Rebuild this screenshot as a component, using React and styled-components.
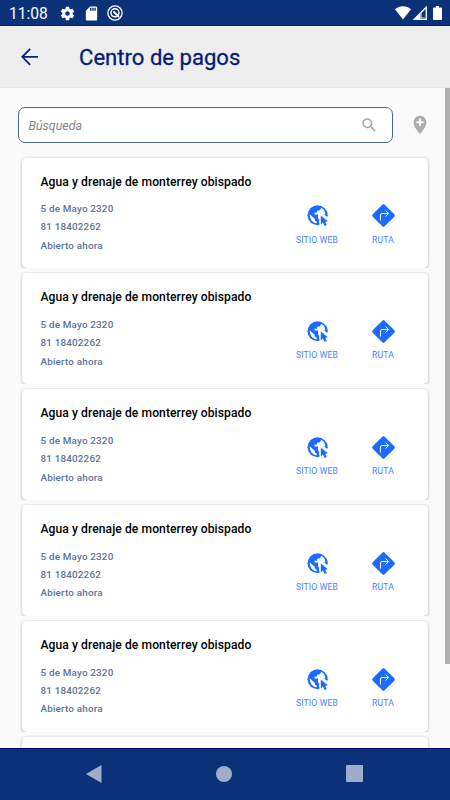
import React from "react";
import styled, { createGlobalStyle } from "styled-components";

const GlobalStyle = createGlobalStyle`
  * {
    box-sizing: border-box;
  }
  body {
    margin: 0;
    background: #fafafa;
    font-family: Roboto, "Liberation Sans", sans-serif;
  }
`;

const Screen = styled.div`
  display: flex;
  flex-direction: column;
  width: 450px;
  height: 800px;
  overflow: hidden;
  background: #fafafa;
`;

const StatusBar = styled.div`
  display: flex;
  align-items: center;
  flex: none;
  height: 26px;
  padding: 1px 8px 0 9px;
  color: #fff;
  background: #0b3178;
  border-bottom: 1px solid #06226f;

  svg {
    display: block;
    flex: none;
  }
`;

const Clock = styled.span`
  width: 50px;
  font-size: 15.6px;
  line-height: 24px;
  padding-top: 2px;
`;

const StatusIcons = styled.div`
  display: flex;
  align-items: center;
  gap: ${({ $gap }) => $gap}px;
  margin-left: ${({ $end }) => ($end ? "auto" : 0)};
`;

const Toolbar = styled.header`
  display: flex;
  align-items: center;
  flex: none;
  height: 62px;
  padding-left: 18px;
  color: #041c78;
  background: #eee;
  border-bottom: 1px solid #e6e6e6;

  h1 {
    margin: 1px 0 0 37px;
    font-size: 22.1px;
    line-height: 28px;
    font-weight: 400;
    -webkit-text-stroke: 0.3px;
    white-space: nowrap;
  }
`;

const Content = styled.main`
  display: flex;
  flex: 1;
  min-height: 0;
  overflow: hidden;
`;

const Body = styled.div`
  flex: 1;
  padding: 19px 13px 0 17.5px;
`;

const ScrollThumb = styled.div`
  flex: none;
  width: 5px;
  height: 576px;
  background: #b0b0b0;
`;

const SearchRow = styled.div`
  display: flex;
  align-items: center;
  height: 36px;
`;

const SearchBox = styled.label`
  display: flex;
  align-items: center;
  justify-content: space-between;
  flex: none;
  width: 375px;
  height: 36px;
  padding: 0 13px 0 10px;
  background: #fff;
  border: 1px solid #4a6793;
  border-radius: 7px;
  margin-right: 16.5px;
  color: #858585;
  font-size: 12.4px;
  font-style: italic;
`;

const List = styled.div`
  display: flex;
  flex-direction: column;
  gap: 3.9px;
  margin: 13px 0 0 2.5px;
`;

const CardShell = styled.article`
  flex: none;
  width: 410px;
  height: 112px;
  padding: 1.5px 2px 0;
  overflow: hidden;
`;

const Card = styled.div`
  height: 110.5px;
  padding: 15px 0 0 18.5px;
  background: #fff;
  border-radius: 5px;
  box-shadow: 0 1px 4px rgba(0, 0, 0, 0.26);

  h2 {
    margin: 0;
    font-size: 12.1px;
    line-height: 18px;
    font-weight: 500;
    letter-spacing: 0.08px;
    color: #000;
  }
`;

const CardBody = styled.div`
  display: flex;
  justify-content: space-between;
  padding-right: 12px;
`;

const Details = styled.div`
  padding-top: 9.7px;
  font-size: 9.9px;
  line-height: 18.3px;
  font-weight: 500;
  letter-spacing: 0.17px;
  color: #5c7397;
`;

const Actions = styled.div`
  display: flex;
  padding-top: 12.5px;
`;

const Action = styled.a`
  display: flex;
  flex-direction: column;
  align-items: center;
  width: 66px;
  color: #4583ff;
  font-size: 8.6px;
  line-height: 12px;
  letter-spacing: 0.15px;

  svg {
    display: block;
    margin-bottom: 5.6px;
  }
`;

const NavBar = styled.nav`
  display: flex;
  align-items: center;
  justify-content: space-between;
  flex: none;
  height: 52px;
  padding: 0 87px 2px 85px;
  background: #0b3178;
  border-top: 1px solid #03056e;

  svg {
    display: block;
  }
`;

const GearIcon = () => (
  <svg width="17" height="17" viewBox="0 0 24 24" fill="#fff">
    <path d="M19.14 12.94c.04-.3.06-.61.06-.94 0-.32-.02-.64-.07-.94l2.03-1.58c.18-.14.23-.41.12-.61l-1.92-3.32c-.12-.22-.37-.29-.59-.22l-2.39.96c-.5-.38-1.03-.7-1.62-.94l-.36-2.54c-.04-.24-.24-.41-.48-.41h-3.84c-.24 0-.43.17-.47.41l-.36 2.54c-.59.24-1.13.57-1.62.94l-2.39-.96c-.22-.08-.47 0-.59.22L2.74 8.87c-.12.21-.08.47.12.61l2.03 1.58c-.05.3-.09.63-.09.94s.02.64.07.94l-2.03 1.58c-.18.14-.23.41-.12.61l1.92 3.32c.12.22.37.29.59.22l2.39-.96c.5.38 1.03.7 1.62.94l.36 2.54c.05.24.24.41.48.41h3.84c.24 0 .44-.17.47-.41l.36-2.54c.59-.24 1.13-.56 1.62-.94l2.39.96c.22.08.47 0 .59-.22l1.92-3.32c.12-.22.07-.47-.12-.61l-2.01-1.58zM12 15.2a3.2 3.2 0 1 1 0-6.4 3.2 3.2 0 0 1 0 6.4z" />
  </svg>
);

const SdCardIcon = () => (
  <svg width="17" height="17" viewBox="0 0 24 24" fill="#fff">
    <path d="M18 2h-8L4.02 8 4 20c0 1.1.9 2 2 2h12c1.1 0 2-.9 2-2V4c0-1.1-.9-2-2-2zm-6 6h-2V4h2v4zm3 0h-2V4h2v4zm3 0h-2V4h2v4z" />
  </svg>
);

const CircleQIcon = () => (
  <svg width="16" height="16" viewBox="0 0 16 16" fill="none" stroke="#fff">
    <circle cx="8" cy="8" r="7.1" strokeWidth="1.3" />
    <circle cx="8" cy="7.8" r="4" strokeWidth="1.5" />
    <path d="M6.5 6.5l5.5 5.5" strokeWidth="1.8" />
  </svg>
);

const WifiIcon = () => (
  <svg width="16" height="14" viewBox="0 0 16 14" fill="#fff">
    <path d="M0 3.3C4.5-.7 11.5-.7 16 3.3L8 13.4z" />
  </svg>
);

const SignalIcon = () => (
  <svg width="14" height="14" viewBox="0 0 14 14">
    <path d="M1.3 13.3L13.3 1.2v12.1z" fill="none" stroke="#fff" strokeWidth="1.3" />
    <path d="M1 13.5L7.5 7v6.5z" fill="#fff" />
    <path d="M8 6.5v5.5h4" fill="none" stroke="#c5cfe2" strokeWidth="1.2" />
  </svg>
);

const BatteryIcon = () => (
  <svg width="9" height="14" viewBox="0 0 9 15" preserveAspectRatio="none" fill="#fff">
    <path d="M3 0h3v1.5h2a1 1 0 0 1 1 1V14a1 1 0 0 1-1 1H1a1 1 0 0 1-1-1V2.5a1 1 0 0 1 1-1h2z" />
  </svg>
);

const BackIcon = () => (
  <svg width="24" height="24" viewBox="0 0 24 24" fill="none" stroke="#0b2380" strokeWidth="1.8">
    <path d="M20 11.8H4.5M12.2 3.8L4.3 11.8l7.9 8" />
  </svg>
);

const SearchIcon = () => (
  <svg width="18.5" height="18.5" viewBox="0 0 24 24" fill="#a7a7a7">
    <path d="M15.5 14h-.79l-.28-.27A6.47 6.47 0 0 0 16 9.5 6.5 6.5 0 1 0 9.5 16c1.61 0 3.09-.59 4.23-1.57l.27.28v.79l5 4.99L20.49 19l-4.99-5zm-6 0C7.01 14 5 11.99 5 9.5S7.01 5 9.5 5 14 7.01 14 9.5 11.99 14 9.5 14z" />
  </svg>
);

const PinIcon = () => (
  <svg width="22" height="22" viewBox="0 0 24 24" fill="#adadad">
    <path d="M12 2C8.14 2 5 5.14 5 9c0 5.25 7 13 7 13s7-7.75 7-13c0-3.86-3.14-7-7-7zm4 8h-3v3h-2v-3H8V8h3V5h2v3h3v2z" />
  </svg>
);

const WebIcon = () => (
  <svg width="25" height="25" viewBox="0 0 25 25">
    <circle cx="12.5" cy="12.2" r="10" fill="#1c6bff" />
    <path d="M4.800 11.200l5 4.800.4 1.700 1.500 1v1.700C7.500 19.700 4.400 16 4.800 11.200z" fill="#fff" />
    <path d="M9.500 11.500V9.800h2.200l.8-2.300h2.200l1.600-2.400c2.200.8 4.300 3 4.300 6.400h-4.500V20.300h-1.900v-4.100l-1.200-.6v-4.100z" fill="#fff" />
    <path d="M14.600 10.500v11.500l1.900.5 1.800 2.500h6.700v-7.500l-2-2-.4-3z" fill="#fff" />
    <path d="M20.300 7.300a9.200 9.200 0 0 1 1.300 6" fill="none" stroke="#1c6bff" strokeWidth="2" />
    <path d="M15.800 12.500l7.100 5.700-2.800.5 1.700 3.300-2.100 1.100-1.800-3.500-2.100 2z" fill="#1c6bff" />
  </svg>
);

const RouteIcon = () => (
  <svg width="25" height="25" viewBox="0 0 25 25">
    <rect x="4" y="4" width="17" height="17" rx="1.7" fill="#1c6bff" transform="rotate(45 12.5 12.5)" />
    <path d="M9.5 17.5v-5.500q0-1.500 1.500-1.500h6.500M14.500 7.500l3.200 3-3.200 3" fill="none" stroke="#fff" strokeWidth="1" />
  </svg>
);

const places = Array.from({ length: 5 }, (_, id) => ({
  id,
  name: "Agua y drenaje de monterrey obispado",
  address: "5 de Mayo 2320",
  phone: "81 18402262",
  status: "Abierto ahora",
}));

const PlaceCard = ({ place }) => (
  <CardShell>
    <Card>
      <h2>{place.name}</h2>
      <CardBody>
        <Details>
          <div>{place.address}</div>
          <div>{place.phone}</div>
          <div>{place.status}</div>
        </Details>
        <Actions>
          <Action>
            <WebIcon />
            SITIO WEB
          </Action>
          <Action>
            <RouteIcon />
            RUTA
          </Action>
        </Actions>
      </CardBody>
    </Card>
  </CardShell>
);

const App = () => {
  return (
    <>
      <GlobalStyle />
      <Screen>
        <StatusBar>
          <Clock>11:08</Clock>
          <StatusIcons $gap={7.2}>
            <GearIcon />
            <SdCardIcon />
            <CircleQIcon />
          </StatusIcons>
          <StatusIcons $gap={2} $end>
            <WifiIcon />
            <SignalIcon />
            <span />
            <span />
            <BatteryIcon />
          </StatusIcons>
        </StatusBar>
        <Toolbar>
          <BackIcon />
          <h1>Centro de pagos</h1>
        </Toolbar>
        <Content>
          <Body>
            <SearchRow>
              <SearchBox>
                Búsqueda
                <SearchIcon />
              </SearchBox>
              <PinIcon />
            </SearchRow>
            <List>
              {places.map((place) => (
                <PlaceCard key={place.id} place={place} />
              ))}
              <CardShell>
                <Card />
              </CardShell>
            </List>
          </Body>
          <ScrollThumb />
        </Content>
        <NavBar>
          <svg width="17" height="18" viewBox="0 0 17 18" fill="#9fadcb">
            <path d="M1 9L16.5 0v18z" />
          </svg>
          <svg width="16" height="16" viewBox="0 0 16 16" fill="#9fadcb">
            <circle cx="8" cy="8" r="8" />
          </svg>
          <svg width="17" height="17" viewBox="0 0 17 17" fill="#9fadcb">
            <rect width="17" height="17" rx="1" />
          </svg>
        </NavBar>
      </Screen>
    </>
  );
};

export default App;
